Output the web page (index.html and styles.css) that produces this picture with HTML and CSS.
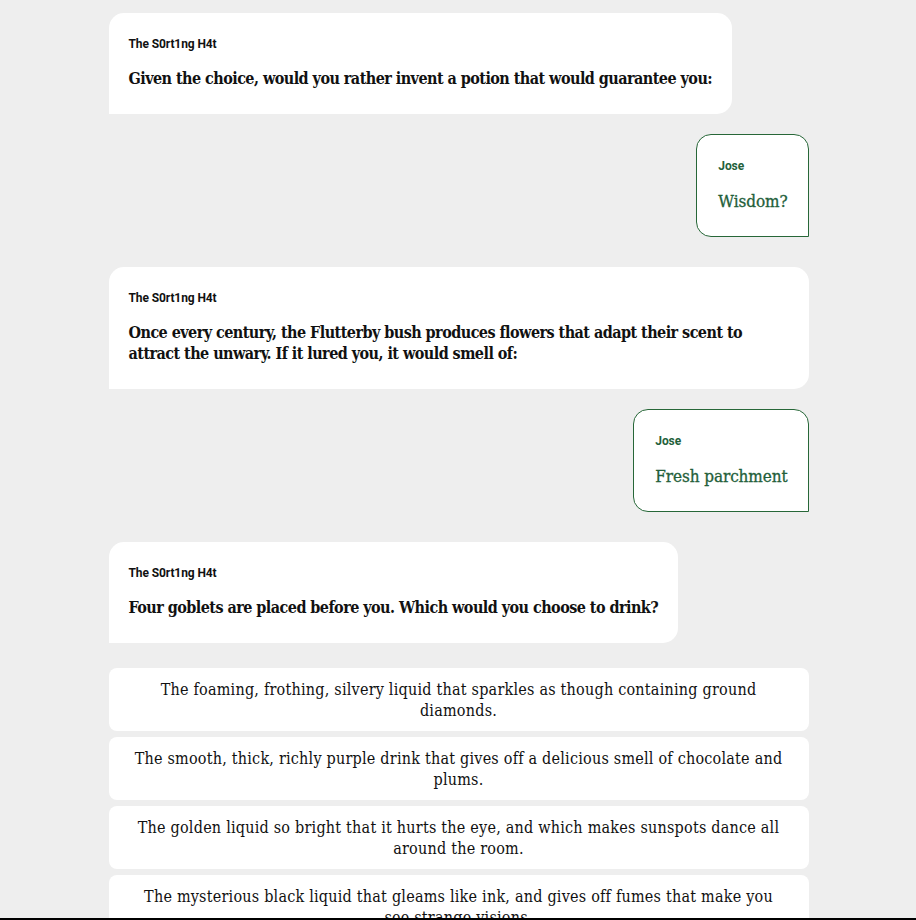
FILE: index.html
```html
<!DOCTYPE html>
<html lang="en">
<head>
<meta charset="utf-8">
<title>The Sorting Hat</title>
<link rel="stylesheet" href="styles.css">
</head>
<body>
<main class="chat">
  <div class="msg bot">
    <div class="sender">The S0rt1ng H4t</div>
    <p class="text">Given the choice, would you rather invent a potion that would guarantee you:</p>
  </div>
  <div class="msg user">
    <div class="sender">Jose</div>
    <p class="text">Wisdom?</p>
  </div>
  <div class="msg bot">
    <div class="sender">The S0rt1ng H4t</div>
    <p class="text">Once every century, the Flutterby bush produces flowers that adapt their scent to attract the unwary. If it lured you, it would smell of:</p>
  </div>
  <div class="msg user">
    <div class="sender">Jose</div>
    <p class="text">Fresh parchment</p>
  </div>
  <div class="msg bot">
    <div class="sender">The S0rt1ng H4t</div>
    <p class="text">Four goblets are placed before you. Which would you choose to drink?</p>
  </div>
  <div class="options">
    <button class="option">The foaming, frothing, silvery liquid that sparkles as though containing ground diamonds.</button>
    <button class="option">The smooth, thick, richly purple drink that gives off a delicious smell of chocolate and plums.</button>
    <button class="option">The golden liquid so bright that it hurts the eye, and which makes sunspots dance all around the room.</button>
    <button class="option">The mysterious black liquid that gleams like ink, and gives off fumes that make you see strange visions.</button>
  </div>
</main>
<div class="bottom-bar"></div>
</body>
</html>
```
FILE: styles.css
```css
html, body {
  margin: 0;
  padding: 0;
  background: #eeeeee;
}
body {
  font-family: "DejaVu Serif Condensed", "DejaVu Serif", serif;
  color: #111111;
}
.chat {
  width: 700px;
  margin: 13px auto 0;
  padding-left: 1px;
  display: flex;
  flex-direction: column;
}
.msg {
  background: #ffffff;
  box-sizing: border-box;
}
.msg.bot {
  align-self: flex-start;
  border-radius: 15px 15px 15px 0;
  padding: 21px 20px 25px 20px;
  margin-bottom: 20px;
}
.msg.user {
  align-self: flex-end;
  border: 1px solid #276738;
  border-radius: 15px 15px 0 15px;
  padding: 21px 20px 23px 21px;
  margin-bottom: 30px;
  color: #23603a;
}
.sender {
  font-family: Roboto, "Liberation Sans", sans-serif;
  font-weight: 700;
  font-size: 12px;
  line-height: 20px;
  letter-spacing: -0.1px;
}
.text {
  margin: 14px 0 0;
  font-size: 16px;
  line-height: 21px;
  font-weight: 700;
  letter-spacing: -0.55px;
}
.msg.user .text {
  font-size: 17px;
  font-weight: 400;
  line-height: 24px;
  margin-top: 13px;
  letter-spacing: -0.1px;
  -webkit-text-stroke: 0.3px #23603a;
}
.options {
  margin-top: 5px;
  display: flex;
  flex-direction: column;
  gap: 6px;
}
.option {
  display: block;
  width: 100%;
  box-sizing: border-box;
  background: #ffffff;
  border: none;
  border-radius: 8px;
  padding: 11px 24px 10px;
  font-family: "DejaVu Serif Condensed", "DejaVu Serif", serif;
  font-size: 16px;
  line-height: 21px;
  letter-spacing: 0.22px;
  color: #111111;
  text-align: center;
}
.bottom-bar {
  position: fixed;
  left: 0;
  right: 0;
  bottom: 0;
  height: 2px;
  background: #000000;
}
```
